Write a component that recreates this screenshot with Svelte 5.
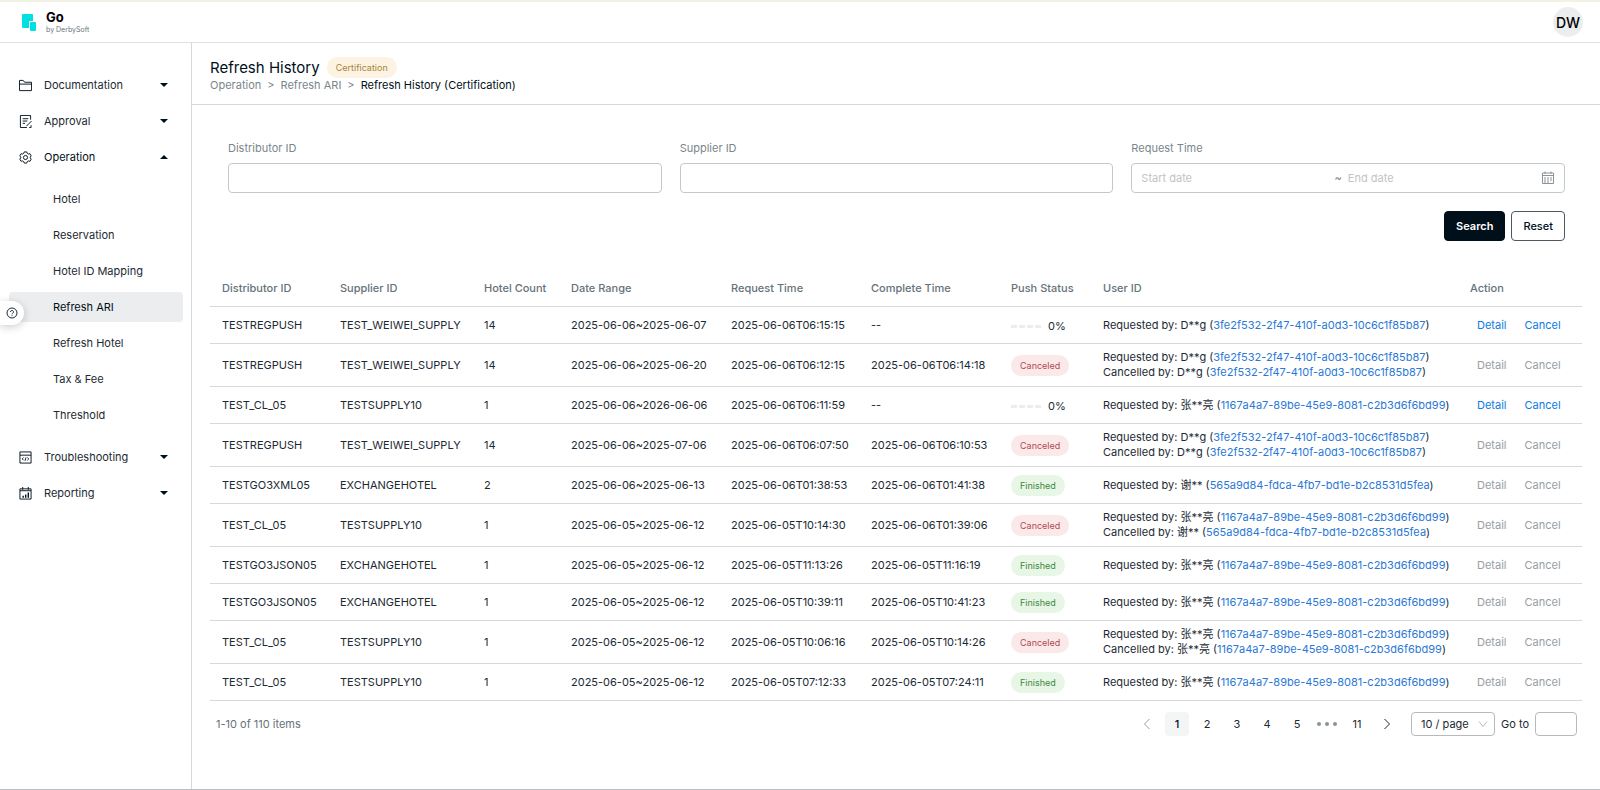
<script>
    const people = {
        d: { name: 'D**g', id: '3fe2f532-2f47-410f-a0d3-10c6c1f85b87' },
        z: { name: '张**亮', id: '1167a4a7-89be-45e9-8081-c2b3d6f6bd99' },
        x: { name: '谢**', id: '565a9d84-fdca-4fb7-bd1e-b2c8531d5fea' }
    };

    const menu = [
        { label: 'Documentation', icon: 'folder' },
        { label: 'Approval', icon: 'approval' },
        {
            label: 'Operation',
            icon: 'gear',
            items: ['Hotel', 'Reservation', 'Hotel ID Mapping', 'Refresh ARI', 'Refresh Hotel', 'Tax & Fee', 'Threshold']
        },
        { label: 'Troubleshooting', icon: 'code' },
        { label: 'Reporting', icon: 'chart' }
    ];

    // Column name and width in px, 0 takes what is left
    const columns = [
        ['Distributor ID', 118],
        ['Supplier ID', 144],
        ['Hotel Count', 87],
        ['Date Range', 160],
        ['Request Time', 140],
        ['Complete Time', 140],
        ['Push Status', 92],
        ['User ID', 0],
        ['Action', 124]
    ];

    const rows = [
        { distributor: 'TESTREGPUSH', supplier: 'TEST_WEIWEI_SUPPLY', count: 14, range: '2025-06-06~2025-06-07', requested: '2025-06-06T06:15:15', completed: '--', status: 'Running', by: people.d },
        { distributor: 'TESTREGPUSH', supplier: 'TEST_WEIWEI_SUPPLY', count: 14, range: '2025-06-06~2025-06-20', requested: '2025-06-06T06:12:15', completed: '2025-06-06T06:14:18', status: 'Canceled', by: people.d, cancelledBy: people.d },
        { distributor: 'TEST_CL_05', supplier: 'TESTSUPPLY10', count: 1, range: '2025-06-06~2026-06-06', requested: '2025-06-06T06:11:59', completed: '--', status: 'Running', by: people.z },
        { distributor: 'TESTREGPUSH', supplier: 'TEST_WEIWEI_SUPPLY', count: 14, range: '2025-06-06~2025-07-06', requested: '2025-06-06T06:07:50', completed: '2025-06-06T06:10:53', status: 'Canceled', by: people.d, cancelledBy: people.d },
        { distributor: 'TESTGO3XML05', supplier: 'EXCHANGEHOTEL', count: 2, range: '2025-06-06~2025-06-13', requested: '2025-06-06T01:38:53', completed: '2025-06-06T01:41:38', status: 'Finished', by: people.x },
        { distributor: 'TEST_CL_05', supplier: 'TESTSUPPLY10', count: 1, range: '2025-06-05~2025-06-12', requested: '2025-06-05T10:14:30', completed: '2025-06-06T01:39:06', status: 'Canceled', by: people.z, cancelledBy: people.x },
        { distributor: 'TESTGO3JSON05', supplier: 'EXCHANGEHOTEL', count: 1, range: '2025-06-05~2025-06-12', requested: '2025-06-05T11:13:26', completed: '2025-06-05T11:16:19', status: 'Finished', by: people.z },
        { distributor: 'TESTGO3JSON05', supplier: 'EXCHANGEHOTEL', count: 1, range: '2025-06-05~2025-06-12', requested: '2025-06-05T10:39:11', completed: '2025-06-05T10:41:23', status: 'Finished', by: people.z },
        { distributor: 'TEST_CL_05', supplier: 'TESTSUPPLY10', count: 1, range: '2025-06-05~2025-06-12', requested: '2025-06-05T10:06:16', completed: '2025-06-05T10:14:26', status: 'Canceled', by: people.z, cancelledBy: people.z },
        { distributor: 'TEST_CL_05', supplier: 'TESTSUPPLY10', count: 1, range: '2025-06-05~2025-06-12', requested: '2025-06-05T07:12:33', completed: '2025-06-05T07:24:11', status: 'Finished', by: people.z }
    ];

    let open = $state('Operation');
    let current = $state('Refresh ARI');
    let page = $state(1);
    let distributor = $state('');
    let supplier = $state('');
    let startDate = $state('');
    let endDate = $state('');

    const toggle = (label) => {
        open = open === label ? '' : label;
    };

    const reset = () => {
        distributor = '';
        supplier = '';
        startDate = '';
        endDate = '';
    };
</script>

{#snippet icon(name)}
    <svg class="icon" viewBox="0 0 14 14" aria-hidden="true">
        {#if name === 'folder'}
            <path d="M.5 12.500v-11h4l1.500 2h7.500v9zM.5 5.500h13" />
        {:else if name === 'approval'}
            <path d="M12.500 5V.5h-11v13h7M4 4h6M4 6.500h5M4 9h2.500M8 12l5.500-5.500M11 13.500h2V11" />
        {:else if name === 'gear'}
            <path d="M5.600 1h2.800l.5 1.600 1.300.7 1.600-.4 1.400 2.400-1.100 1.200v1l1.100 1.200-1.400 2.400-1.600-.4-1.300.7-.5 1.600H5.600l-.5-1.600-1.300-.7-1.600.4L.8 8.700l1.100-1.200v-1L.8 5.300l1.400-2.400 1.600.4 1.300-.7z" />
            <circle cx="7" cy="7" r="2.200" />
        {:else if name === 'code'}
            <path d="M1 1h12v12H1zM1 4.500h12" />
            <path d="M5 7L3.500 8.500 5 10M9 7l1.500 1.500L9 10M7.500 7l-1 3.500" />
        {:else}
            <path d="M1 2h12v11H1zM1 4h12M4 0v3M10 0v3" />
            <path d="M4.500 11.500v-2M7.200 11.500v-3.500M10 11.500V6" stroke-width="1.500" />
        {/if}
    </svg>
{/snippet}

{#snippet user(label, person)}
    <div>{label} by: {person.name} (<a href="#user">{person.id}</a>)</div>
{/snippet}

<div class="layout">
    <header class="topbar">
        <a class="brand" href="#home">
            <svg class="logo" viewBox="0 0 14 17" aria-hidden="true">
                <path d="M1 0h9a1 1 0 0 1 1 1v6H8a1 1 0 0 0-1 1v6H1a1 1 0 0 1-1-1V1a1 1 0 0 1 1-1z" />
                <rect x="8" y="8" width="6" height="9" rx="1" />
            </svg>
            <span class="brand-text">
                <strong>Go</strong>
                <small>by DerbySoft</small>
            </span>
        </a>
        <button class="avatar">DW</button>
    </header>

    <nav class="sidebar">
        {#each menu as group}
            <button class="group" class:active={open === group.label} onclick={() => toggle(group.label)}>
                {@render icon(group.icon)}
                <span>{group.label}</span>
                <i class="caret"></i>
            </button>
            {#if group.items && open === group.label}
                <div class="submenu">
                    {#each group.items as item}
                        <a href="#menu" class:current={current === item} onclick={() => (current = item)}>{item}</a>
                    {/each}
                </div>
            {/if}
        {/each}
    </nav>

    <button class="help" aria-label="Help">
        <svg viewBox="0 0 12 12" aria-hidden="true">
            <circle cx="6" cy="6" r="5" />
            <path d="M4.500 5a1.500 1.500 0 1 1 2.300 1.200Q6 6.600 6 7.300M6 8.300v.9" />
        </svg>
    </button>

    <main>
        <div class="page-head">
            <div class="title">
                <h1>Refresh History</h1>
                <span class="pill cert">Certification</span>
            </div>
            <div class="crumbs">
                <a href="#operation">Operation</a>
                <span>&gt;</span>
                <a href="#refresh">Refresh ARI</a>
                <span>&gt;</span>
                <b>Refresh History (Certification)</b>
            </div>
        </div>

        <form class="filters" onsubmit={(e) => e.preventDefault()}>
            <div class="field">
                <label for="distributor">Distributor ID</label>
                <input id="distributor" class="box" type="text" bind:value={distributor} />
            </div>
            <div class="field">
                <label for="supplier">Supplier ID</label>
                <input id="supplier" class="box" type="text" bind:value={supplier} />
            </div>
            <div class="field">
                <label for="start">Request Time</label>
                <div class="box range">
                    <input id="start" type="text" placeholder="Start date" bind:value={startDate} />
                    <span>~</span>
                    <input type="text" placeholder="End date" aria-label="End date" bind:value={endDate} />
                    <svg class="calendar" viewBox="0 0 14 14" aria-hidden="true">
                        <path d="M1.500 2h11v10.500h-11zM1.500 4.500h11M4 .5V3M10 .5V3" />
                        <path d="M3 7h8M3 9h8M3 11h5" stroke-dasharray="2 1" />
                    </svg>
                </div>
            </div>
            <div class="buttons">
                <button class="primary" type="submit">Search</button>
                <button class="secondary" type="button" onclick={reset}>Reset</button>
            </div>
        </form>

        <section class="results">
            <table>
                <colgroup>
                    {#each columns as [, width]}
                        <col style:width={width ? `${width}px` : 'auto'} />
                    {/each}
                </colgroup>
                <thead>
                    <tr>
                        {#each columns as [name]}
                            <th>{name}</th>
                        {/each}
                    </tr>
                </thead>
                <tbody>
                    {#each rows as row}
                        <tr>
                            <td>{row.distributor}</td>
                            <td>{row.supplier}</td>
                            <td>{row.count}</td>
                            <td>{row.range}</td>
                            <td>{row.requested}</td>
                            <td>{row.completed}</td>
                            <td>
                                {#if row.status === 'Running'}
                                    <div class="progress"><i></i><i></i><i></i><i></i><span>0%</span></div>
                                {:else}
                                    <span class="pill {row.status.toLowerCase()}">{row.status}</span>
                                {/if}
                            </td>
                            <td>
                                {@render user('Requested', row.by)}
                                {#if row.cancelledBy}
                                    {@render user('Cancelled', row.cancelledBy)}
                                {/if}
                            </td>
                            <td>
                                <div class="actions">
                                    <button disabled={row.status !== 'Running'}>Detail</button>
                                    <button disabled={row.status !== 'Running'}>Cancel</button>
                                </div>
                            </td>
                        </tr>
                    {/each}
                </tbody>
            </table>

            <div class="pager">
                <span class="total">1-10 of 110 items</span>
                <button aria-label="Previous page" disabled={page === 1} onclick={() => page--}>
                    <svg class="arrow" viewBox="0 0 10 10"><path d="M7.500 0l-5 5 5 5" /></svg>
                </button>
                {#each [1, 2, 3, 4, 5] as n}
                    <button class:selected={page === n} onclick={() => (page = n)}>{n}</button>
                {/each}
                <span class="dots"><i></i><i></i><i></i></span>
                <button class:selected={page === 11} onclick={() => (page = 11)}>11</button>
                <button aria-label="Next page" disabled={page === 11} onclick={() => page++}>
                    <svg class="arrow" viewBox="0 0 10 10"><path d="M2.500 0l5 5-5 5" /></svg>
                </button>
                <div class="size">
                    <select aria-label="Page size">
                        <option>10 / page</option>
                        <option>20 / page</option>
                        <option>50 / page</option>
                    </select>
                    <svg class="arrow" viewBox="0 0 10 10"><path d="M1 2.500l4 5 4-5" /></svg>
                </div>
                <label for="goto">Go to</label>
                <input id="goto" type="text" />
            </div>
        </section>
    </main>
</div>

<style>
    :global(body) {
        background: #fff;
    }

    .layout {
        display: grid;
        grid-template-columns: 192px minmax(0, 1fr);
        grid-template-rows: 41px 1fr;
        min-height: 100vh;
        box-sizing: border-box;
        border-top: 2px solid #f1f2e4;
        border-bottom: 1px solid #b9c0c4;
        font-family: Inter, 'Noto Sans CJK SC', sans-serif;
        font-size: 11px;
        line-height: 15px;
        color: #1c2a33;
    }

    button,
    input,
    select {
        box-sizing: border-box;
        margin: 0;
        padding: 0;
        border: 0;
        background: none;
        font: inherit;
        color: inherit;
    }

    button {
        cursor: pointer;
    }

    a {
        color: inherit;
        text-decoration: none;
    }

    svg {
        fill: none;
        stroke: currentColor;
    }

    .topbar {
        grid-column: 1 / 3;
        display: flex;
        align-items: center;
        justify-content: space-between;
        box-sizing: border-box;
        padding: 0 17px 0 22px;
        border-bottom: 1px solid #dfe1e2;
    }

    .brand {
        display: flex;
        align-items: center;
        gap: 10px;
    }

    .logo {
        width: 14px;
        height: 17px;
        fill: #00e0e0;
        stroke: none;
    }

    .brand-text {
        display: flex;
        flex-direction: column;
    }

    .brand-text strong {
        font-size: 13px;
        color: #000;
    }

    .brand-text small {
        font-size: 7px;
        line-height: 10px;
        color: #6b757b;
    }

    .avatar {
        width: 30px;
        height: 30px;
        border-radius: 50%;
        background: #ebedee;
        font-size: 14px;
        font-weight: 500;
        color: #000;
    }

    .sidebar {
        display: flex;
        flex-direction: column;
        gap: 6px;
        padding: 27px 8px 0 9px;
        border-right: 1px solid #d5d9db;
    }

    .group {
        display: flex;
        align-items: center;
        gap: 12px;
        height: 30px;
        padding: 0 15px 0 10px;
        text-align: left;
    }

    .group span {
        flex: 1;
    }

    .group.active {
        color: #00101a;
    }

    .icon {
        width: 13px;
        height: 13px;
        color: #00101a;
    }

    .caret {
        border: 4px solid transparent;
        border-top-color: #00101a;
        border-bottom-width: 0;
    }

    .active .caret {
        border-width: 0 4px 4px;
        border-bottom-color: #00101a;
    }

    .submenu {
        display: flex;
        flex-direction: column;
        gap: 6px;
        padding: 6px 0;
    }

    .submenu a {
        padding-left: 44px;
        border-radius: 4px;
        line-height: 30px;
        white-space: nowrap;
    }

    .submenu .current {
        background: #ebedee;
        color: #00101a;
    }

    /* Floats over the menu, stuck to the window edge */
    .help {
        position: fixed;
        left: 0;
        top: 301px;
        display: flex;
        align-items: center;
        justify-content: center;
        width: 24px;
        height: 24px;
        border-radius: 0 12px 12px 0;
        background: #fff;
        box-shadow: 0 2px 8px rgba(0, 16, 26, 0.2);
    }

    .help svg {
        width: 12px;
        height: 12px;
    }

    .page-head {
        padding: 14px 18px 11px;
        border-bottom: 1px solid #d5d9db;
    }

    .title {
        display: flex;
        align-items: center;
        gap: 7px;
        height: 21px;
    }

    h1 {
        margin: 0;
        font-size: 15px;
        font-weight: 400;
        color: #00101a;
    }

    .pill {
        display: inline-block;
        padding: 0 9px;
        border-radius: 11px;
        font-size: 9px;
        line-height: 21px;
    }

    .cert {
        background: #fdf3e3;
        color: #a98337;
    }

    .canceled {
        background: #fbe9e9;
        color: #b04a50;
    }

    .finished {
        background: #e7f6e5;
        color: #3f8742;
    }

    .crumbs {
        display: flex;
        gap: 6px;
        color: #7b868c;
    }

    .crumbs b {
        font-weight: 400;
        color: #00101a;
    }

    .filters {
        display: grid;
        grid-template-columns: repeat(3, minmax(0, 1fr));
        gap: 18px;
        padding: 36px 35px 0 36px;
    }

    .field {
        display: flex;
        flex-direction: column;
        gap: 7px;
        color: #7b868c;
    }

    .box {
        width: 100%;
        height: 30px;
        box-sizing: border-box;
        padding: 0 9px;
        border: 1px solid #c3c8cb;
        border-radius: 4px;
        color: #1c2a33;
    }

    .range {
        display: flex;
        align-items: center;
        gap: 6px;
    }

    .range input {
        flex: 1;
        min-width: 0;
        height: 28px;
        outline: 0;
    }

    .range input::placeholder {
        color: #bfc3c6;
    }

    .range span {
        color: #7b868c;
    }

    .calendar {
        width: 14px;
        height: 14px;
        color: #8b9499;
    }

    .buttons {
        grid-column: 1 / 4;
        display: flex;
        justify-content: flex-end;
        gap: 6px;
    }

    .buttons button {
        height: 30px;
        padding: 0 11px;
        border: 1px solid #00101a;
        border-radius: 4px;
        font-weight: 500;
        color: #00101a;
    }

    .buttons .primary {
        background: #00101a;
        font-weight: 600;
        color: #fff;
    }

    .buttons .secondary {
        border-color: #4d5860;
    }

    .results {
        padding: 29px 18px 0;
    }

    table {
        width: 100%;
        table-layout: fixed;
        border-collapse: separate;
        border-spacing: 0;
    }

    th,
    td {
        height: 36px;
        box-sizing: content-box;
        padding: 0 0 0 12px;
        border-bottom: 1px solid #d5d9db;
        text-align: left;
        white-space: nowrap;
    }

    th {
        font-weight: 500;
        color: #66727a;
    }

    td div + div {
        margin-bottom: 6px;
    }

    td div:has(+ div) {
        margin-top: 6px;
    }

    td a {
        color: #2a78d6;
    }

    .progress {
        display: flex;
        align-items: center;
        gap: 2px;
        padding-top: 3px;
    }

    .progress i {
        width: 6px;
        height: 3px;
        background: #ededed;
    }

    .progress span {
        margin-left: 5px;
    }

    .actions {
        display: flex;
        gap: 18px;
        padding-left: 7px;
    }

    .actions button {
        color: #0a7be4;
    }

    .actions button:disabled {
        color: #969ea3;
        cursor: default;
    }

    .pager {
        display: flex;
        align-items: center;
        gap: 6px;
        padding: 11px 5px 11px 6px;
    }

    .total {
        margin-right: auto;
        color: #66727a;
    }

    .pager button,
    .dots {
        display: flex;
        align-items: center;
        justify-content: center;
        width: 24px;
        height: 24px;
        border-radius: 4px;
    }

    .pager button:disabled {
        color: #969ea3;
    }

    .pager .selected {
        background: #f4f5f5;
        font-weight: 500;
        color: #00101a;
    }

    .dots {
        gap: 4px;
    }

    .dots i {
        width: 4px;
        height: 4px;
        border-radius: 50%;
        background: #8b9499;
    }

    .arrow {
        width: 10px;
        height: 10px;
    }

    .size {
        display: grid;
        align-items: center;
        margin-left: 6px;
    }

    .size select,
    .size .arrow {
        grid-area: 1 / 1;
    }

    .size select {
        appearance: none;
        width: 84px;
        height: 24px;
        padding: 0 9px;
        border: 1px solid #b4babe;
        border-radius: 4px;
    }

    .size .arrow {
        justify-self: end;
        margin-right: 7px;
        color: #b4babe;
        pointer-events: none;
    }

    .pager input {
        width: 42px;
        height: 24px;
        padding: 0 6px;
        border: 1px solid #b4babe;
        border-radius: 4px;
    }
</style>
